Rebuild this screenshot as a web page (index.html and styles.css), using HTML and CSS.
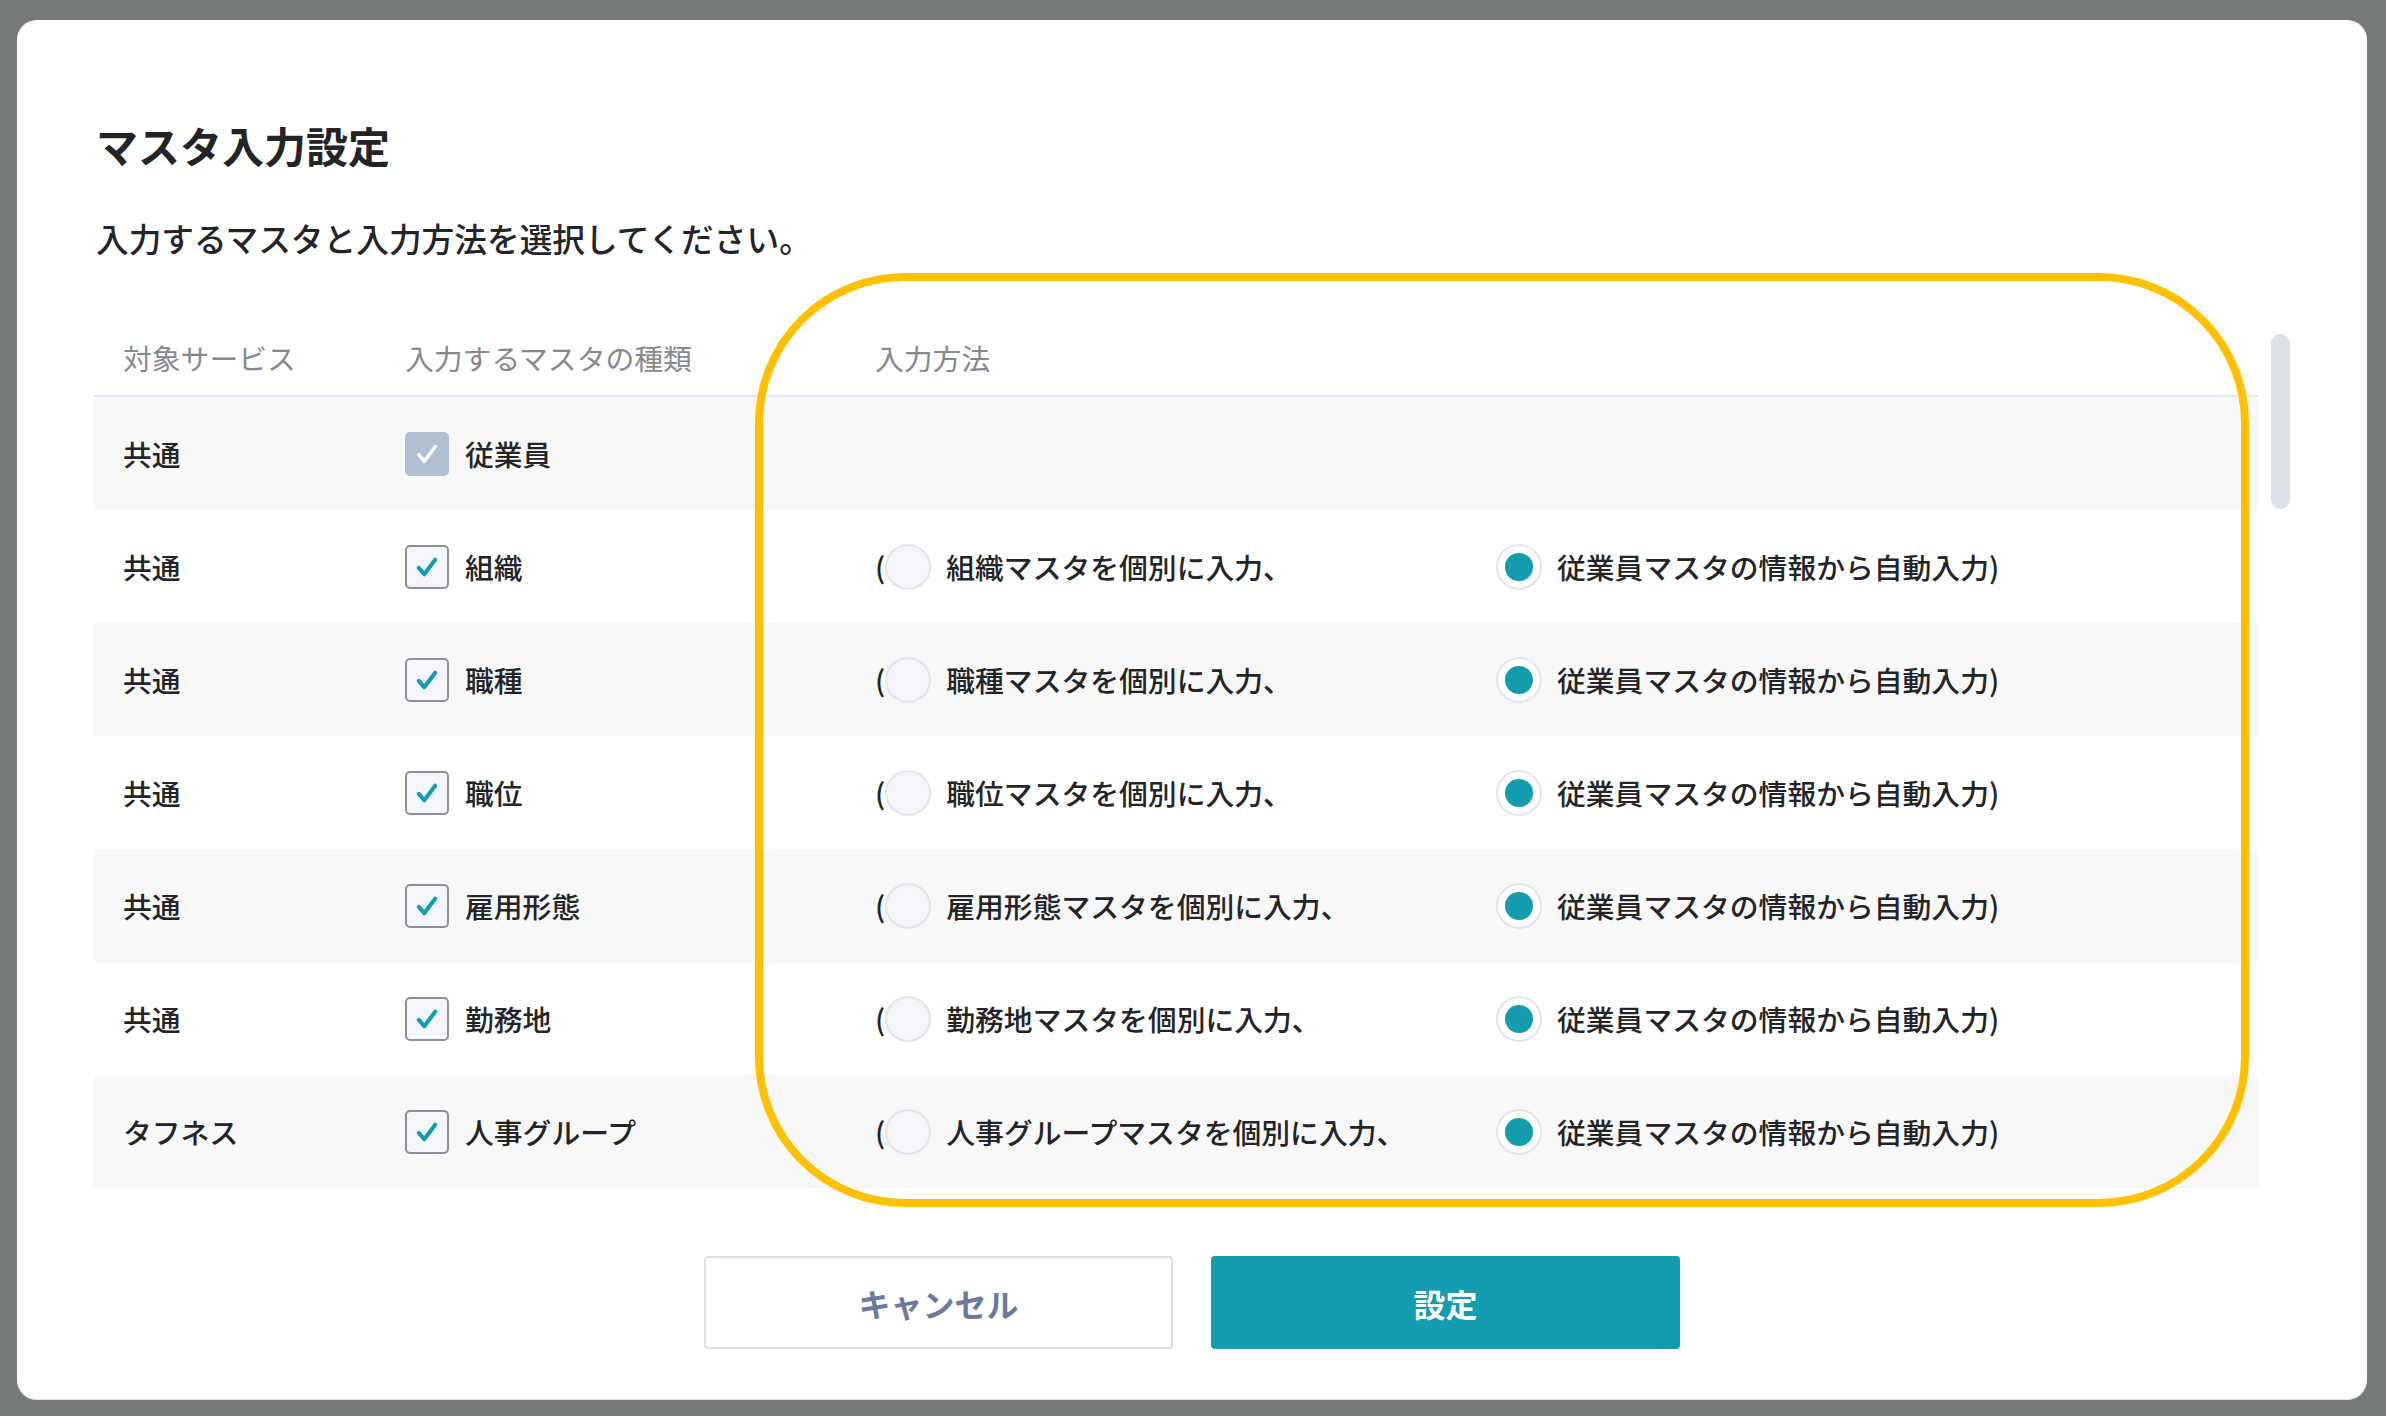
FILE: index.html
```html
<!DOCTYPE html>
<html lang="ja">
<head>
  <meta charset="utf-8" />
  <title>マスタ入力設定</title>
  <meta name="viewport" content="width=device-width, initial-scale=1" />
  <link rel="stylesheet" href="styles.css">
</head>
<body>
  <div class="modal">
    <h1 class="title">マスタ入力設定</h1>
    <p class="lead">入力するマスタと入力方法を選択してください。</p>

    <div class="table-wrap">
      <div class="table">
        <div class="row head">
          <div class="cell">対象サービス</div>
          <div class="cell">入力するマスタの種類</div>
          <div class="cell">入力方法</div>
        </div>

        <div class="row">
          <div class="cell">共通</div>
          <div class="cell"><span class="check disabled"><svg viewBox="0 0 44 44"><polyline points="13,23 19,30 31,14" /></svg></span>従業員</div>
          <div class="cell"></div>
        </div>

        <div class="row">
          <div class="cell">共通</div>
          <div class="cell"><span class="check"><svg viewBox="0 0 44 44"><polyline points="13,23 19,30 31,14" /></svg></span>組織</div>
          <div class="cell">
            <span class="opt first">(<span class="radio"></span>組織マスタを個別に入力、</span>
            <span class="opt"><span class="radio on"></span>従業員マスタの情報から自動入力)</span>
          </div>
        </div>

        <div class="row">
          <div class="cell">共通</div>
          <div class="cell"><span class="check"><svg viewBox="0 0 44 44"><polyline points="13,23 19,30 31,14" /></svg></span>職種</div>
          <div class="cell">
            <span class="opt first">(<span class="radio"></span>職種マスタを個別に入力、</span>
            <span class="opt"><span class="radio on"></span>従業員マスタの情報から自動入力)</span>
          </div>
        </div>

        <div class="row">
          <div class="cell">共通</div>
          <div class="cell"><span class="check"><svg viewBox="0 0 44 44"><polyline points="13,23 19,30 31,14" /></svg></span>職位</div>
          <div class="cell">
            <span class="opt first">(<span class="radio"></span>職位マスタを個別に入力、</span>
            <span class="opt"><span class="radio on"></span>従業員マスタの情報から自動入力)</span>
          </div>
        </div>

        <div class="row">
          <div class="cell">共通</div>
          <div class="cell"><span class="check"><svg viewBox="0 0 44 44"><polyline points="13,23 19,30 31,14" /></svg></span>雇用形態</div>
          <div class="cell">
            <span class="opt first">(<span class="radio"></span>雇用形態マスタを個別に入力、</span>
            <span class="opt"><span class="radio on"></span>従業員マスタの情報から自動入力)</span>
          </div>
        </div>

        <div class="row">
          <div class="cell">共通</div>
          <div class="cell"><span class="check"><svg viewBox="0 0 44 44"><polyline points="13,23 19,30 31,14" /></svg></span>勤務地</div>
          <div class="cell">
            <span class="opt first">(<span class="radio"></span>勤務地マスタを個別に入力、</span>
            <span class="opt"><span class="radio on"></span>従業員マスタの情報から自動入力)</span>
          </div>
        </div>

        <div class="row">
          <div class="cell">タフネス</div>
          <div class="cell"><span class="check"><svg viewBox="0 0 44 44"><polyline points="13,23 19,30 31,14" /></svg></span>人事グループ</div>
          <div class="cell">
            <span class="opt first">(<span class="radio"></span>人事グループマスタを個別に入力、</span>
            <span class="opt"><span class="radio on"></span>従業員マスタの情報から自動入力)</span>
          </div>
        </div>
      </div>

      <div class="scroll"><div class="thumb"></div></div>
    </div>

    <div class="actions">
      <button class="btn cancel" type="button">キャンセル</button>
      <button class="btn primary" type="button">設定</button>
    </div>

    <!-- annotation frame -->
    <div class="highlight"></div>
  </div>
</body>
</html>
```

FILE: styles.css
```css
:root {
  --teal:#139cad;
  --text:#222427;
  --muted:#85888d;
  --line:#e2e6ee;
  --stripe:#f8f8f9;
}
body {
  margin:0;
  background:#76797a;
  font-family:'Noto Sans CJK JP','Noto Sans',sans-serif;
  color:var(--text);
}
.modal {
  position:relative;
  margin:20px 19px 18px 17px;
  background:#fff;
  border-radius:20px;
  padding:95px 77px 50px 77px;
  box-shadow:0 1px 0 #dfe3ea;
}
.title {
  margin:0 0 0 2px;
  font-size:42px;
  line-height:60px;
  font-weight:700;
}
.lead {
  margin:39px 0 0 2px;
  font-size:32.7px;
  line-height:48px;
  font-weight:500;
}
.table-wrap {
  margin-top:58px;
  display:flex;
  gap:13px;
}
.table {
  flex:1;
}
.row {
  display:grid;
  grid-template-columns:282px 470px 1fr;
  height:113px;
  align-items:center;
  font-size:28.8px;
  font-weight:500;
}
.row:nth-child(even) {
  background:var(--stripe);
}
.row.head {
  height:75px;
  border-bottom:2px solid var(--line);
  color:var(--muted);
  font-weight:400;
}
.cell {
  padding-left:29px;
  display:flex;
  align-items:center;
}
.check {
  width:44px;
  height:44px;
  box-sizing:border-box;
  border:2px solid #8d9098;
  border-radius:5px;
  background:#f4f6fa;
  margin-right:16px;
  display:flex;
}
.check svg {
  width:100%;
  height:100%;
  fill:none;
  stroke:var(--teal);
  stroke-width:4.5;
  stroke-linecap:round;
  stroke-linejoin:round;
}
.check.disabled {
  background:#b2bfd2;
  border-color:#b2bfd2;
}
.check.disabled svg {
  stroke:#fff;
  stroke-width:4;
}
.opt {
  display:flex;
  align-items:center;
  white-space:nowrap;
}
.opt.first {
  width:621px;
}
.radio {
  width:46px;
  height:46px;
  box-sizing:border-box;
  border:2px solid #e1e5ee;
  background:#f4f6fa;
  border-radius:50%;
  margin-right:15px;
  display:flex;
  align-items:center;
  justify-content:center;
}
.radio.on {
  background:#fff;
}
.radio.on::after {
  content:'';
  width:28px;
  height:28px;
  border-radius:50%;
  background:var(--teal);
}
.scroll {
  width:19px;
}
.thumb {
  margin-top:14px;
  height:175px;
  border-radius:10px;
  background:#dde1ea;
}
.actions {
  margin-top:68px;
  display:flex;
  justify-content:center;
  gap:38px;
}
.btn {
  width:469px;
  height:93px;
  border-radius:4px;
  font-family:inherit;
  font-size:32px;
  font-weight:700;
  cursor:pointer;
}
.btn.cancel {
  background:#fff;
  border:2px solid #dcdfe6;
  color:#6b7a9b;
}
.btn.primary {
  background:var(--teal);
  border:none;
  color:#fff;
}
.highlight {
  position:absolute;
  left:738px;
  top:253px;
  width:1494px;
  height:934px;
  box-sizing:border-box;
  border:8px solid #ffc000;
  border-radius:150px;
  pointer-events:none;
}
```
